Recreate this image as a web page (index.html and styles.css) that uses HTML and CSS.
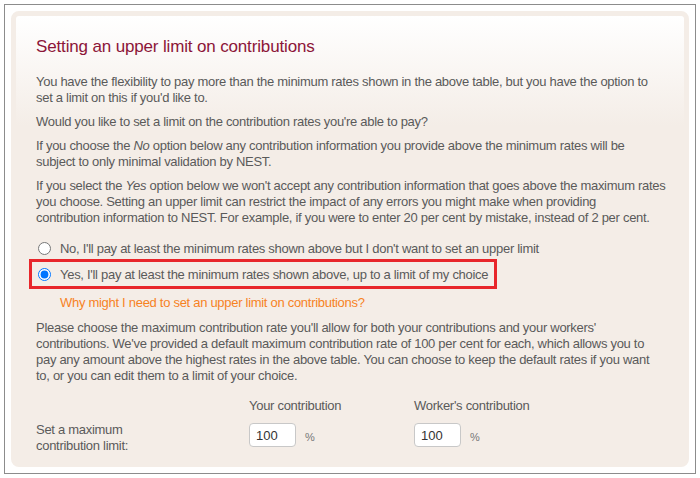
FILE: index.html
```html
<!DOCTYPE html>
<html lang="en">
<head>
	<meta charset="UTF-8">
	<title>Contribution limits</title>
	<link rel="stylesheet" href="styles.css">
</head>
<body>
	<div class="frame">
		<div class="card">
			<h2 class="title">Setting an upper limit on contributions</h2>

			<p>You have the flexibility to pay more than the minimum rates shown in the above table, but you have the option to<br>
			set a limit on this if you'd like to.</p>
			<p>Would you like to set a limit on the contribution rates you're able to pay?</p>
			<p>If you choose the <em>No</em> option below any contribution information you provide above the minimum rates will be<br>
			subject to only minimal validation by NEST.</p>
			<p>If you select the <em>Yes</em> option below we won't accept any contribution information that goes above the maximum rates<br>
			you choose. Setting an upper limit can restrict the impact of any errors you might make when providing<br>
			contribution information to NEST. For example, if you were to enter 20 per cent by mistake, instead of 2 per cent.</p>

			<div class="options">
				<label class="option"><input type="radio" name="limit"> No, I'll pay at least the minimum rates shown above but I don't want to set an upper limit</label>
				<label class="option selected"><input type="radio" name="limit" checked> Yes, I'll pay at least the minimum rates shown above, up to a limit of my choice</label>
			</div>

			<a class="why" href="#">Why might I need to set an upper limit on contributions?</a>

			<p>Please choose the maximum contribution rate you'll allow for both your contributions and your workers'<br>
			contributions. We've provided a default maximum contribution rate of 100 per cent for each, which allows you to<br>
			pay any amount above the highest rates in the above table. You can choose to keep the default rates if you want<br>
			to, or you can edit them to a limit of your choice.</p>

			<div class="limits">
				<span></span>
				<span class="head">Your contribution</span>
				<span class="head">Worker's contribution</span>

				<span class="label">Set a maximum<br>contribution limit:</span>
				<span class="field"><input type="text" value="100"> <span class="unit">%</span></span>
				<span class="field"><input type="text" value="100"> <span class="unit">%</span></span>
			</div>
		</div>
	</div>
</body>
</html>
```

FILE: styles.css
```css
html, body {
	margin: 0;
	background: #fff;
}
body {
	padding: 4px;
	font-family: "Liberation Sans", Arial, sans-serif;
	font-size: 13px;
	letter-spacing: -0.29px;
	color: #5a5a5a;
}
.frame {
	border: 1px solid #8c8c8c;
	padding: 6px;
	box-sizing: border-box;
	height: 470px;
}
.card {
	border: 5px solid #f4ede7;
	border-radius: 8px;
	background: linear-gradient(#fff 0, #f4ede7 110px);
	padding: 21px 10px 0 20px;
	height: 100%;
	box-sizing: border-box;
}
.title {
	margin: 0 0 17px 0;
	font-weight: normal;
	font-size: 17px;
	letter-spacing: -0.15px;
	color: #8c1538;
}
p {
	margin: 0 0 8px 0;
	line-height: 16px;
}
em {
	font-style: italic;
}
.options {
	margin-top: 11px;
	display: flex;
	flex-direction: column;
}
.option {
	display: flex;
	align-items: center;
	gap: 9px;
	height: 22px;
	padding-left: 2px;
	box-sizing: border-box;
}
.option input {
	margin: 0;
	width: 13px;
	height: 13px;
}
.option.selected {
	margin-left: -7px;
	padding-left: 6px;
	width: 468px;
	height: 30px;
	border: 3px solid #e8262b;
}
.why {
	display: block;
	margin: 6px 0 9px 24px;
	line-height: 16px;
	color: #f7821f;
	text-decoration: none;
}
.limits {
	display: grid;
	grid-template-columns: 213px 165px auto;
	row-gap: 8px;
	margin-top: 14px;
}
.head {
	line-height: 16px;
}
.label {
	line-height: 16px;
}
.field {
	display: flex;
	align-items: center;
	gap: 9px;
	align-self: start;
	padding-top: 1px;
}
.field input {
	width: 47px;
	height: 24px;
	box-sizing: border-box;
	border: 1px solid #c8c8c8;
	border-radius: 4px;
	padding: 0 6px;
	font-family: "Liberation Sans", Arial, sans-serif;
	font-size: 13px;
	color: #333;
	margin: 0;
}
.unit {
	font-size: 11px;
	padding-top: 4px;
	color: #777;
}
```
